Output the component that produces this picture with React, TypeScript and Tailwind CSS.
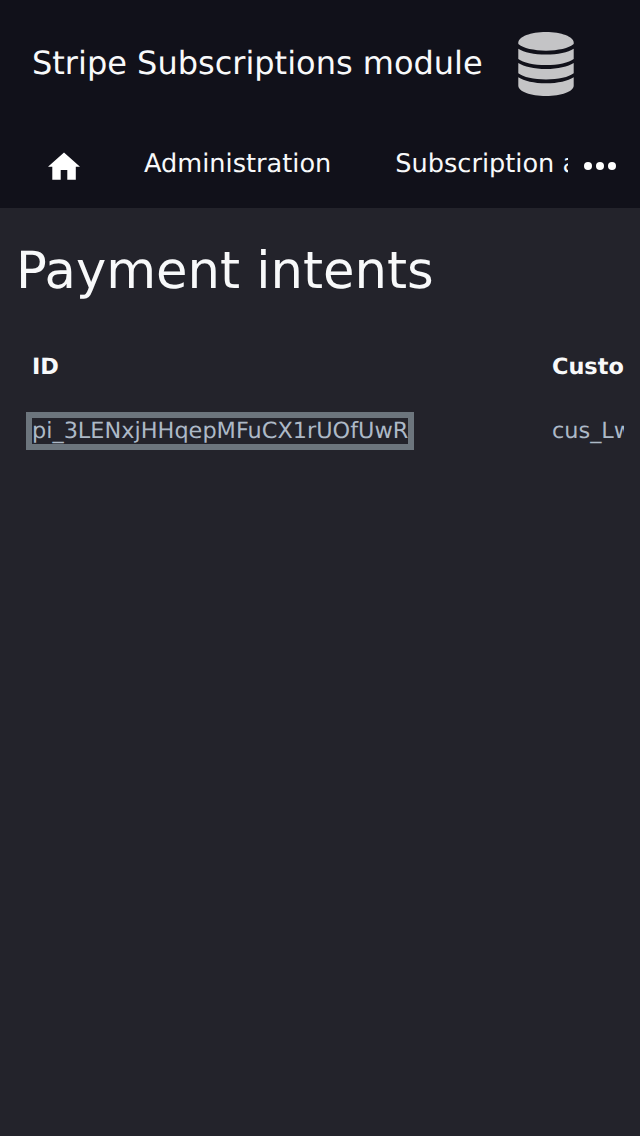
import React from 'react';

const columns = ['ID', 'Customer'];
const payments = [{ id: 'pi_3LENxjHHqepMFuCX1rUOfUwR', customer: 'cus_LwExample' }];

function DatabaseIcon() {
  return (
    <svg className="h-16 w-14 shrink-0" viewBox="0 0 56 64" fill="#c4c4c6" aria-hidden="true">
      <path d="M.3 10.5C.3 4.7 12.7 0 28 0s27.7 4.7 27.7 10.5v1.6C51 16.3 40 18.7 28 18.7S5 16.3.3 12.1z" />
      <path d="M.3 16.8C6 20.4 16 22.6 28 22.6s22-2.2 27.7-5.8v10.1C51 30.6 40 33 28 33S5 30.6.3 26.9z" />
      <path d="M.3 31C6 34.6 16 37 28 37s22-2.4 27.7-6v10.2C51 45 40 47.4 28 47.4S5 45 .3 41.2z" />
      <path d="M.3 45.2C6 48.8 16 51.3 28 51.3s22-2.5 27.7-6.1v8.5C55.7 59.4 43.3 64 28 64S.3 59.4.3 53.7z" />
    </svg>
  );
}

function HomeIcon() {
  return (
    <svg className="h-7 w-8" viewBox="0 0 32 28" fill="currentColor" aria-hidden="true">
      <path d="M16 .6 32 14.7h-4.2v13h-8.5V18h-6.6v9.7H4.3v-13H0z" />
    </svg>
  );
}

export default function App() {
  return (
    <div className="h-[1136px] w-full overflow-hidden bg-[#23232b] font-['DejaVu_Sans',sans-serif] text-[#f8f9fa] [text-rendering:geometricPrecision]">
      <header className="h-[208px] bg-[#11111a]">
        <div className="flex h-32 items-center gap-[35px] pl-8">
          <span className="-mt-0.5 whitespace-nowrap text-[32px] leading-[48px]">Stripe Subscriptions module</span>
          <DatabaseIcon />
        </div>
        <nav className="flex h-[76px] items-center text-white">
          <a className="flex w-32 shrink-0 items-center justify-center">
            <HomeIcon />
          </a>
          <div className="-mt-1 flex min-w-0 flex-1 gap-16 overflow-hidden whitespace-nowrap pl-4 text-[25.6px] text-[#f8f9fa]">
            <span>Administration</span><span>Subscription actions</span>
          </div>
          <button className="flex w-[72px] shrink-0 gap-[3.5px] pl-[15.75px]" aria-label="More">
            <i className="size-[8.5px] rounded-full bg-white" /><i className="size-[8.5px] rounded-full bg-white" /><i className="size-[8.5px] rounded-full bg-white" />
          </button>
        </nav>
      </header>
      <main className="px-4">
        <h1 className="pt-[31px] text-[51.2px] leading-[64px]">Payment intents</h1>
        <div className="mt-[33px] overflow-hidden">
          <table className="w-[900px] table-fixed border-collapse text-left text-[22.4px]">
            <colgroup><col className="w-[520px]" /><col /></colgroup>
            <thead><tr className="h-16">{columns.map((name) => <th key={name} className="px-4 font-bold">{name}</th>)}</tr></thead>
            <tbody>{payments.map((p) => <tr key={p.id} className="h-16 text-[#adb9c7]"><td className="px-4"><a className="outline-[6px] outline-solid outline-[#6c757d]">{p.id}</a></td><td className="px-4">{p.customer}</td></tr>)}</tbody>
          </table>
        </div>
      </main>
    </div>
  );
}
